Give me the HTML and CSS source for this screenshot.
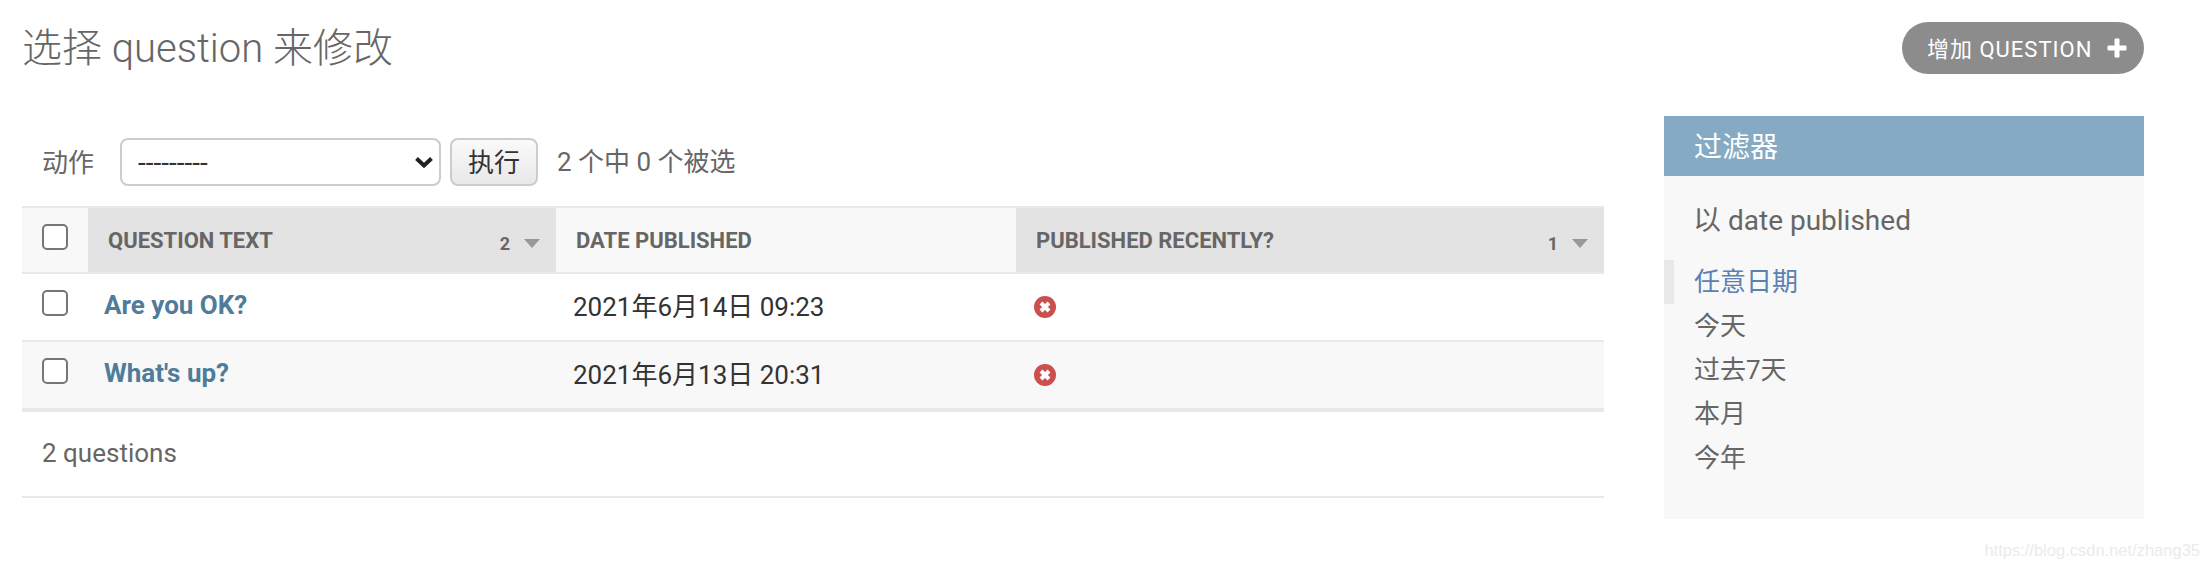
FILE: index.html
```html
<!DOCTYPE html>
<html lang="zh-CN">
<head>
    <meta charset="UTF-8">
    <meta name="viewport" content="width=device-width, initial-scale=1.0">
    <title>选择 question 来修改</title>
    <link rel="stylesheet" href="styles.css">
</head>
<body>
    <div class="content">
        <div class="page-head">
            <h1>选择 question 来修改</h1>
            <a class="add-btn" href="#">
                <span>增加 QUESTION</span>
                <svg class="add-icon" width="20" height="20" viewBox="0 0 20 20"><path d="M7.5 1.5a1 1 0 0 1 1-1h3a1 1 0 0 1 1 1v6h6a1 1 0 0 1 1 1v3a1 1 0 0 1-1 1h-6v6a1 1 0 0 1-1 1h-3a1 1 0 0 1-1-1v-6h-6a1 1 0 0 1-1-1v-3a1 1 0 0 1 1-1h6z" fill="#fff"/></svg>
            </a>
        </div>

        <div class="main">
            <div class="changelist">
                <div class="actions">
                    <label class="action-label">动作</label>
                    <div class="select-wrap">
                        <select class="action-select">
                            <option>---------</option>
                        </select>
                        <svg class="select-arrow" width="20" height="12" viewBox="0 0 20 12"><path d="M2.5 2.5 10 9.5l7.500-7" fill="none" stroke="#222" stroke-width="4"/></svg>
                    </div>
                    <button class="go-btn">执行</button>
                    <span class="counter">2 个中 0 个被选</span>
                </div>

                <table class="results">
                    <colgroup>
                        <col class="col-check">
                        <col class="col-text">
                        <col class="col-date">
                        <col class="col-recent">
                    </colgroup>
                    <thead>
                        <tr>
                            <th><input type="checkbox" class="check"></th>
                            <th class="sorted">
                                <div class="th-inner">
                                    <span>Question text</span>
                                    <span class="sort">2 <i class="sort-arrow"></i></span>
                                </div>
                            </th>
                            <th><div class="th-inner"><span>Date published</span></div></th>
                            <th class="sorted">
                                <div class="th-inner">
                                    <span>Published recently?</span>
                                    <span class="sort">1 <i class="sort-arrow"></i></span>
                                </div>
                            </th>
                        </tr>
                    </thead>
                    <tbody>
                        <tr>
                            <td><input type="checkbox" class="check"></td>
                            <td class="q-link"><a href="#">Are you OK?</a></td>
                            <td>2021年6月14日 09:23</td>
                            <td class="bool"><svg class="no-icon" width="22" height="22" viewBox="0 0 22 22"><circle cx="11" cy="11" r="11" fill="#cc4f4f"/><path d="M7 7l8 8M15 7l-8 8" stroke="#fff" stroke-width="4"/></svg></td>
                        </tr>
                        <tr class="alt">
                            <td><input type="checkbox" class="check"></td>
                            <td class="q-link"><a href="#">What's up?</a></td>
                            <td>2021年6月13日 20:31</td>
                            <td class="bool"><svg class="no-icon" width="22" height="22" viewBox="0 0 22 22"><circle cx="11" cy="11" r="11" fill="#cc4f4f"/><path d="M7 7l8 8M15 7l-8 8" stroke="#fff" stroke-width="4"/></svg></td>
                        </tr>
                    </tbody>
                </table>

                <p class="paginator">2 questions</p>
            </div>

            <div class="filter">
                <h2>过滤器</h2>
                <h3>以 date published</h3>
                <ul>
                    <li class="selected"><a href="#">任意日期</a></li>
                    <li><a href="#">今天</a></li>
                    <li><a href="#">过去7天</a></li>
                    <li><a href="#">本月</a></li>
                    <li><a href="#">今年</a></li>
                </ul>
            </div>
        </div>
    </div>
    <div class="watermark">https://blog.csdn.net/zhang35</div>
</body>
</html>
```

FILE: styles.css
```css
* {
    box-sizing: border-box;
}
body {
    margin: 0;
    background: #fff;
    font-family: Roboto, "Noto Sans CJK SC", sans-serif;
    font-size: 26px;
    color: #333;
}
a {
    text-decoration: none;
}
.content {
    padding: 22px 66px 0 22px;
}
.page-head {
    display: flex;
    justify-content: space-between;
    align-items: flex-start;
    height: 94px;
}
h1 {
    margin: 0;
    font-size: 40px;
    font-weight: 300;
    line-height: 54px;
    color: #666;
}
.add-btn {
    display: flex;
    align-items: center;
    width: 242px;
    height: 52px;
    padding-left: 25px;
    padding-bottom: 3px;
    border-radius: 26px;
    background: #8c8c8c;
    color: #fff;
    font-size: 22px;
    letter-spacing: 1px;
}
.add-icon {
    margin-left: auto;
    margin-right: 17px;
    margin-top: 3px;
}
.main {
    display: flex;
    align-items: flex-start;
}
.changelist {
    width: 1582px;
    padding-top: 22px;
}
.actions {
    display: flex;
    align-items: center;
    height: 48px;
    padding-left: 20px;
    color: #666;
}
.action-label {
    margin-right: 26px;
    padding-bottom: 4px;
}
.select-wrap {
    position: relative;
    width: 321px;
    height: 48px;
    margin-right: 9px;
}
.action-select {
    width: 100%;
    height: 100%;
    padding-left: 16px;
    appearance: none;
    border: 2px solid #ccc;
    border-radius: 8px;
    background: #fff;
    color: #333;
    font-family: inherit;
    font-size: 28px;
}
.select-arrow {
    position: absolute;
    top: 18px;
    right: 7px;
}
.go-btn {
    width: 88px;
    height: 48px;
    padding: 0 0 3px;
    border: 2px solid #ccc;
    border-radius: 8px;
    background: linear-gradient(#fafafa, #e8e8e8);
    color: #333;
    font-family: inherit;
    font-size: 26px;
}
.counter {
    margin-left: 19px;
    padding-bottom: 6px;
    color: #666;
}
.results {
    width: 100%;
    margin-top: 20px;
    border-collapse: separate;
    border-spacing: 0;
    table-layout: fixed;
}
.col-check {
    width: 66px;
}
.col-text {
    width: 468px;
}
.col-date {
    width: 460px;
}
.results th {
    height: 68px;
    padding: 0 0 0 20px;
    border-top: 2px solid #e8e8e8;
    border-bottom: 2px solid #e8e8e8;
    background: #f8f8f8;
    color: #666;
    font-size: 22px;
    font-weight: 700;
    text-align: left;
    text-transform: uppercase;
    vertical-align: middle;
}
.results th.sorted {
    background: #e3e3e3;
}
.results th .check {
    margin-bottom: 6px;
}
.th-inner {
    display: flex;
    justify-content: space-between;
    align-items: center;
    padding-right: 16px;
}
.sort {
    display: flex;
    align-items: center;
    gap: 14px;
    margin-top: 7px;
    font-size: 18px;
}
.sort-arrow {
    width: 0;
    height: 0;
    border-left: 8px solid transparent;
    border-right: 8px solid transparent;
    border-top: 9px solid #999;
}
.results td {
    height: 68px;
    padding: 0 0 5px 17px;
    border-bottom: 2px solid #e8e8e8;
    vertical-align: middle;
}
.results td:first-child {
    padding-left: 20px;
}
.results tr.alt td {
    height: 70px;
    background: #f8f8f8;
    border-bottom-width: 4px;
}
.results td.q-link {
    padding-left: 16px;
}
.results td.bool {
    padding-bottom: 0;
    padding-left: 18px;
}
.check {
    display: block;
    width: 26px;
    height: 26px;
    margin: 0 0 3px;
    appearance: none;
    border: 2px solid #767676;
    border-radius: 5px;
    background: #fff;
}
.q-link a {
    color: #4f7c9a;
    font-weight: 700;
}
.no-icon {
    display: block;
}
.paginator {
    height: 86px;
    margin: 0;
    padding-left: 20px;
    border-bottom: 2px solid #e8e8e8;
    color: #666;
    line-height: 82px;
}
.filter {
    width: 480px;
    height: 403px;
    margin-left: 60px;
    background: #f8f8f8;
}
.filter h2 {
    height: 60px;
    margin: 0;
    padding-left: 30px;
    background: #85abc4;
    color: #fff;
    font-size: 28px;
    font-weight: 400;
    line-height: 64px;
}
.filter h3 {
    margin: 25px 0 0;
    padding-left: 29px;
    color: #666;
    font-size: 28px;
    font-weight: 400;
    line-height: 40px;
}
.filter ul {
    margin: 19px 0 0;
    padding: 0;
    list-style: none;
}
.filter li {
    height: 44px;
    padding-left: 20px;
    border-left: 10px solid transparent;
    line-height: 44px;
}
.filter li a {
    color: #666;
}
.filter li.selected {
    border-left-color: #e8e8e8;
}
.filter li.selected a {
    color: #5b80b2;
}
.watermark {
    position: absolute;
    top: 538px;
    right: 10px;
    color: #ebebeb;
    font-family: "Liberation Sans", sans-serif;
    font-size: 16.500px;
    line-height: 24px;
}
```
